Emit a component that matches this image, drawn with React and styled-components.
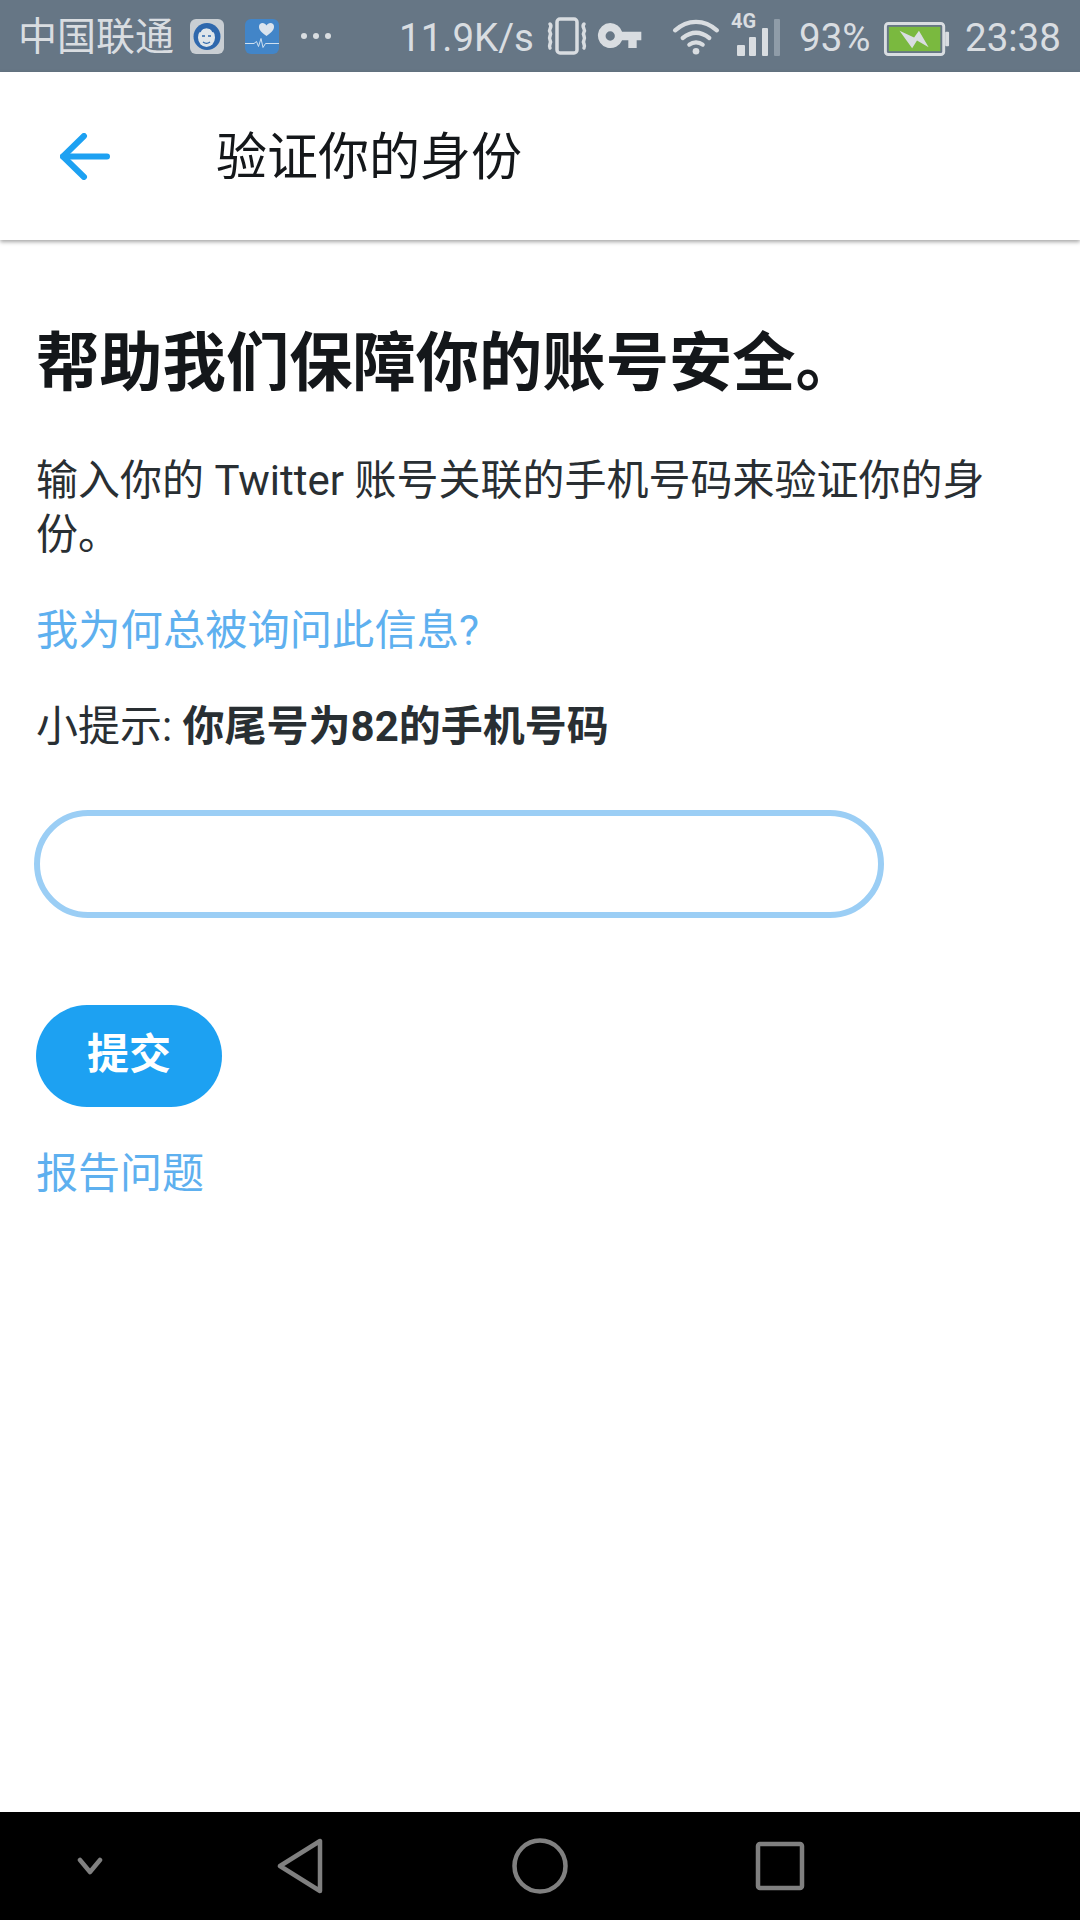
import React from "react";
import styled, { createGlobalStyle } from "styled-components";

const GlobalStyle = createGlobalStyle`
  html, body {
    margin: 0;
    padding: 0;
    background: #fff;
  }
  * {
    box-sizing: border-box;
  }
`;

const fontStack = `Roboto, "Noto Sans CJK SC", sans-serif`;

function VibrateIcon() {
  return (
    <svg width="40" height="38" viewBox="0 0 40 38" fill="none" stroke="#d9dde1">
      <rect x="10" y="2" width="20" height="34" rx="3" strokeWidth="3.500" />
      <path d="M3 7c3 3-2 5 0 8s-2 5 0 8 -2 5 0 8M37 7c-3 3 2 5 0 8s2 5 0 8 2 5 0 8" strokeWidth="3.500" strokeLinecap="round" />
    </svg>
  );
}

function KeyIcon() {
  return (
    <svg width="47" height="26" viewBox="0 0 47 28" fill="#d9dde1">
      <path fillRule="evenodd" d="M13.5 0a13.5 13.5 0 0 1 12.8 9.5H47v9h-5v8.500h-9v-8.500h-6.700A13.500 13.500 0 1 1 13.500 0zm0 9a5 5 0 1 0 0 10 5 5 0 0 0 0-10z" />
    </svg>
  );
}

function WifiIcon() {
  return (
    <svg width="50" height="38" viewBox="0 0 50 40" fill="none" stroke="#d9dde1" strokeWidth="4.500" strokeLinecap="round">
      <path d="M3 13c13-12 31-12 44 0" />
      <path d="M11 21c9-7 19-7 28 0" />
      <path d="M18 28c4-3 10-3 14 0" />
      <circle cx="25" cy="35" r="3.500" fill="#d9dde1" stroke="none" />
    </svg>
  );
}

function SignalIcon() {
  return (
    <svg width="44" height="37" viewBox="0 0 44 37" fill="#d9dde1">
      <rect x="0" y="26" width="8" height="11" rx="1" />
      <rect x="12" y="18" width="7" height="19" rx="1" />
      <rect x="25" y="9" width="6" height="28" rx="1" />
      <rect x="37" y="0" width="6" height="37" rx="1" fill="#8f9ca8" />
    </svg>
  );
}

function BatteryIcon() {
  return (
    <svg width="68" height="34" viewBox="0 0 68 35" fill="none">
      <rect x="1.500" y="1.500" width="60" height="32" rx="3" stroke="#d9dde1" strokeWidth="3" />
      <rect x="5" y="5" width="53" height="25" fill="#7ab93f" />
      <rect x="63" y="10" width="4" height="15" rx="1" fill="#d9dde1" />
      <path d="M16 9l15 7 5-7 10 17-12-7-5 8z" fill="#d9dde1" />
    </svg>
  );
}

function FaceBadge() {
  return (
    <svg width="34" height="35" viewBox="0 0 34 35">
      <rect width="34" height="35" rx="6" fill="#c9ced3" />
      <circle cx="17" cy="17.500" r="13.500" fill="#2f68ad" />
      <ellipse cx="16.500" cy="18.500" rx="8.500" ry="9.500" fill="#dfe5ea" />
      <path d="M10 13c2-6 11-6 13 0" fill="none" stroke="#2f68ad" strokeWidth="1.500" />
      <path d="M12 17h3M18 17h3M13 23c2 1.500 5 1.500 7 0" stroke="#2f68ad" strokeWidth="1.300" fill="none" />
    </svg>
  );
}

function HeartBadge() {
  return (
    <svg width="34" height="35" viewBox="0 0 34 35">
      <rect width="34" height="35" rx="6" fill="#4285c8" />
      <path d="M21.500 17c-7-5-7.500-7-7.500-9.500 0-2 1.500-3.500 3.500-3.500 1.700 0 3.200 1 4 2.500.8-1.500 2.300-2.500 4-2.500 2 0 3.500 1.500 3.500 3.500 0 2.500-.5 4.500-7.500 9.500z" fill="#dbe4ee" />
      <path d="M0 24.500h9l2.500-2 2 5 2.500-8 2 9 2.500-4h13.500" fill="none" stroke="#cfe0f0" strokeWidth="1" />
    </svg>
  );
}

function BackArrow() {
  return (
    <svg width="50" height="47" viewBox="0 0 50 47" fill="none" stroke="#1da1f2" strokeWidth="6" strokeLinecap="round" strokeLinejoin="round">
      <path d="M3 23.500h44" />
      <path d="M24 3L3 23.500 24 44" />
    </svg>
  );
}

function NavChevron() {
  return (
    <svg width="30" height="18" viewBox="0 0 30 18" fill="none" stroke="#808080" strokeWidth="4.500" strokeLinecap="round" strokeLinejoin="round">
      <path d="M5 3l10 12L25 3" />
    </svg>
  );
}

function NavBack() {
  return (
    <svg width="46" height="56" viewBox="0 0 46 56" fill="none" stroke="#808080" strokeWidth="4.500" strokeLinejoin="round">
      <path d="M43 3v50L3 28z" />
    </svg>
  );
}

function NavHome() {
  return (
    <svg width="56" height="56" viewBox="0 0 56 56" fill="none" stroke="#808080" strokeWidth="4.500">
      <circle cx="28" cy="28" r="25.500" />
    </svg>
  );
}

function NavRecent() {
  return (
    <svg width="50" height="50" viewBox="0 0 50 50" fill="none" stroke="#808080" strokeWidth="4.500" strokeLinejoin="round">
      <rect x="3" y="3" width="44" height="44" rx="2" />
    </svg>
  );
}

function App() {
  return (
    <Screen>
      <GlobalStyle />
      <StatusBar>
        <Carrier>中国联通</Carrier>
        <IconSlot>
          <FaceBadge />
        </IconSlot>
        <HeartSlot>
          <HeartBadge />
        </HeartSlot>
        <MoreDots>
          <i />
          <i />
          <i />
        </MoreDots>
        <StatusText>11.9K/s</StatusText>
        <VibrateSlot>
          <VibrateIcon />
        </VibrateSlot>
        <KeySlot>
          <KeyIcon />
        </KeySlot>
        <WifiSlot>
          <WifiIcon />
        </WifiSlot>
        <SignalSlot>
          <NetworkLabel>4G</NetworkLabel>
          <SignalIcon />
        </SignalSlot>
        <BatteryPercent>93%</BatteryPercent>
        <BatterySlot>
          <BatteryIcon />
        </BatterySlot>
        <Clock>23:38</Clock>
      </StatusBar>
      <Header>
        <BackButton>
          <BackArrow />
        </BackButton>
        <HeaderTitle>验证你的身份</HeaderTitle>
      </Header>
      <Content>
        <Headline>帮助我们保障你的账号安全。</Headline>
        <BodyText>输入你的 Twitter 账号关联的手机号码来验证你的身份。</BodyText>
        <HelpLink>我为何总被询问此信息?</HelpLink>
        <Hint>
          小提示: <strong>你尾号为82的手机号码</strong>
        </Hint>
        <PhoneInput type="text" />
        <SubmitButton>提交</SubmitButton>
        <ReportLink>报告问题</ReportLink>
      </Content>
      <NavBar>
        <NavSlot $width={180}>
          <NavChevron />
        </NavSlot>
        <NavSlot $width={240}>
          <NavBack />
        </NavSlot>
        <NavSlot $width={240}>
          <NavHome />
        </NavSlot>
        <NavSlot $width={240}>
          <NavRecent />
        </NavSlot>
      </NavBar>
    </Screen>
  );
}

const Screen = styled.div`
  width: 1080px;
  height: 1920px;
  display: flex;
  flex-direction: column;
  overflow: hidden;
  background: #fff;
  font-family: ${fontStack};
`;

const StatusBar = styled.div`
  height: 72px;
  flex: none;
  display: flex;
  align-items: center;
  padding-left: 18px;
  background: #667685;
  color: #d9dde1;
  font-size: 39px;
  line-height: 1;
`;

const Carrier = styled.span`
  width: 172px;
  flex: none;
  margin-top: 2px;
`;

const IconSlot = styled.span`
  display: flex;
  flex: none;
`;

const HeartSlot = styled(IconSlot)`
  margin-left: 21px;
`;

const MoreDots = styled.span`
  display: flex;
  flex: none;
  gap: 6px;
  margin-left: 22px;

  i {
    width: 6px;
    height: 6px;
    border-radius: 50%;
    background: #d9dde1;
  }
`;

const StatusText = styled.span`
  flex: none;
  width: 136px;
  margin: 4px 0 0 68px;
  font-size: 38.500px;
  white-space: nowrap;
`;

const VibrateSlot = styled(IconSlot)`
  margin-left: 12px;
`;

const KeySlot = styled(IconSlot)`
  margin-left: 9px;
`;

const WifiSlot = styled(IconSlot)`
  margin-left: 28px;
  margin-top: 2px;
`;

const SignalSlot = styled(IconSlot)`
  position: relative;
  margin-left: 16px;
  margin-top: 3px;
`;

const NetworkLabel = styled.span`
  position: absolute;
  left: -6px;
  top: -8px;
  font-size: 20px;
  font-weight: 700;
`;

const BatteryPercent = styled.span`
  flex: none;
  margin: 4px 0 0 18px;
  width: 73px;
  font-size: 38.500px;
`;

const BatterySlot = styled(IconSlot)`
  margin-left: 11px;
  margin-top: 5px;
`;

const Clock = styled.span`
  flex: none;
  margin: 4px 0 0 14px;
  font-size: 38.500px;
`;

const Header = styled.header`
  height: 168px;
  flex: none;
  display: flex;
  align-items: center;
  background: #fff;
  box-shadow: 0 2px 4px rgba(0, 0, 0, 0.35);
  position: relative;
`;

const BackButton = styled.span`
  display: flex;
  flex: none;
  margin-left: 60px;
`;

const HeaderTitle = styled.h1`
  margin: 2px 0 0 106px;
  color: #14171a;
  font-size: 51px;
  font-weight: 400;
  line-height: 1;
`;

const Content = styled.main`
  flex: 1;
  padding: 0 36px;
`;

const Headline = styled.h2`
  margin: 85px 0 0;
  color: #14171a;
  font-size: 63.300px;
  font-weight: 700;
  line-height: 76px;
`;

const BodyText = styled.p`
  margin: 53px 0 0;
  max-width: 990px;
  color: #292f33;
  font-size: 42px;
  line-height: 54px;
`;

const HelpLink = styled.a`
  display: block;
  margin-top: 42px;
  color: #5eb0ef;
  font-size: 42.300px;
  line-height: 54px;
`;

const Hint = styled.p`
  margin: 42px 0 0;
  color: #292f33;
  font-size: 42px;
  line-height: 54px;

  strong {
    font-weight: 700;
  }
`;

const PhoneInput = styled.input`
  display: block;
  width: 850px;
  height: 108px;
  margin: 56px 0 0 -2px;
  padding: 0 40px;
  border: 6px solid #9bcef5;
  border-radius: 54px;
  outline: none;
  background: #fff;
`;

const SubmitButton = styled.button`
  display: block;
  width: 186px;
  height: 102px;
  margin: 87px 0 0;
  padding: 0 0 11px;
  border: 0;
  border-radius: 51px;
  background: #1da1f2;
  color: #fff;
  font-family: ${fontStack};
  font-size: 42px;
  font-weight: 700;
`;

const ReportLink = styled.a`
  display: block;
  margin-top: 40px;
  color: #5eb0ef;
  font-size: 42px;
  line-height: 54px;
`;

const NavBar = styled.nav`
  height: 108px;
  flex: none;
  display: flex;
  align-items: center;
  background: #000;
`;

const NavSlot = styled.span`
  width: ${(props) => props.$width}px;
  display: flex;
  justify-content: center;
`;

export default App;
